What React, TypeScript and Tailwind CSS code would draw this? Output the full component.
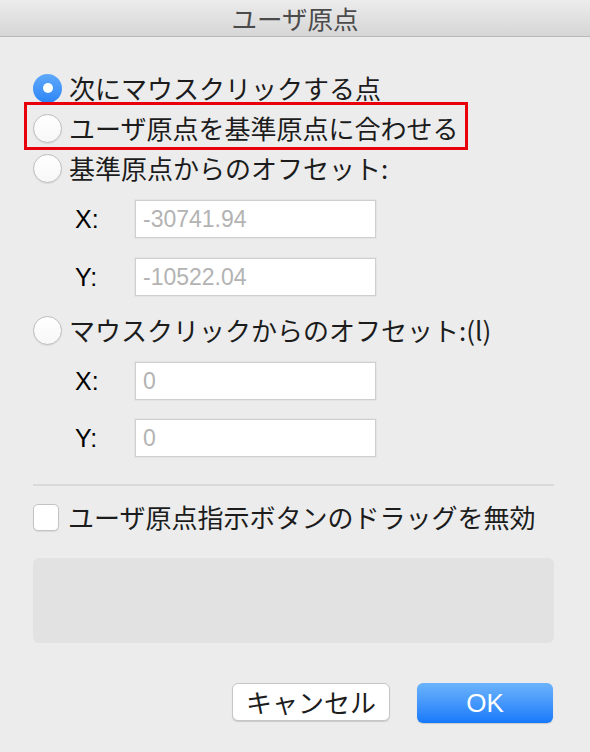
const jp = "font-['Hiragino_Kaku_Gothic_ProN','Noto_Sans_CJK_JP',sans-serif]";
const latin = "font-['Liberation_Sans','Noto_Sans_CJK_JP',sans-serif]";

const Radio = ({ checked }: { checked?: boolean }) =>
  checked ? (
    <span className="flex h-[29px] w-[29px] shrink-0 items-center justify-center rounded-full bg-gradient-to-b from-[#5fa9fb] to-[#2b85f5]">
      <span className="h-[10px] w-[10px] rounded-full bg-white" />
    </span>
  ) : (
    <span className="h-[29px] w-[29px] shrink-0 rounded-full border border-[#bdbdbd] bg-gradient-to-b from-white to-[#f7f7f7] shadow-[0_1px_1px_rgba(0,0,0,0.08)]" />
  );

const RadioRow = ({ label, checked }: { label: string; checked?: boolean }) => (
  <div className="flex h-[40px] items-center gap-[7px]">
    <Radio checked={checked} />
    <span className={`${jp} text-[26px] leading-none text-[#1c1c1c]`}>{label}</span>
  </div>
);

const Field = ({ label, value }: { label: string; value: string }) => (
  <div className="flex h-[38px] items-center pl-[42px]">
    <span className={`${latin} w-[60px] text-[25px] leading-none text-black`}>{label}</span>
    <div className="flex h-[38px] w-[241px] items-center border border-[#cfcfcf] bg-white pl-[7px] shadow-[0_0_0_1px_#e4e4e4]">
      <span className={`${latin} text-[23px] leading-none text-[#b3b3b3]`}>{value}</span>
    </div>
  </div>
);

export default function App() {
  return (
    <div className="h-[752px] w-[590px] overflow-hidden bg-[#ececec]">
      <div className="flex h-[37px] items-center justify-center border-b border-[#b9b9b9] bg-gradient-to-b from-[#ececec] to-[#d6d6d6]">
        <span className={`${jp} text-[25.5px] leading-none text-[#4b4b4b]`}>ユーザ原点</span>
      </div>

      <div className="px-[33px] pt-[31px]">
        <RadioRow label="次にマウスクリックする点" checked />
        <div className="relative">
          <RadioRow label="ユーザ原点を基準原点に合わせる" />
          <span className="absolute -left-[9px] -top-[6px] -bottom-[2px] w-[444px] border-[3px] border-[#e8000b]" />
        </div>
        <RadioRow label="基準原点からのオフセット:" />

        <div className="mt-[12px] flex flex-col gap-[20px]">
          <Field label="X:" value="-30741.94" />
          <Field label="Y:" value="-10522.04" />
        </div>

        <div className="mt-[14px]">
          <RadioRow label="マウスクリックからのオフセット:(l)" />
        </div>

        <div className="mt-[12px] flex flex-col gap-[19px]">
          <Field label="X:" value="0" />
          <Field label="Y:" value="0" />
        </div>

        <div className="mt-[27px] h-[2px] w-[521px] bg-[#dadada]" />

        <div className="mt-[11px] flex h-[40px] items-center gap-[9px]">
          <span className="h-[27px] w-[26px] shrink-0 rounded-[5px] border border-[#c3c3c3] bg-white shadow-[0_1px_1px_rgba(0,0,0,0.08)]" />
          <span className={`${jp} text-[26px] leading-none text-[#1c1c1c]`}>ユーザ原点指示ボタンのドラッグを無効</span>
        </div>

        <div className="mt-[21px] h-[85px] w-[521px] rounded-[6px] bg-[#e2e2e2]" />

        <div className="mt-[40px] flex justify-end gap-[27px] pr-[4px]">
          <button className={`${jp} flex h-[38px] w-[158px] items-center justify-center rounded-[6px] border border-[#c6c6c6] bg-white text-[26px] leading-none text-[#1c1c1c] shadow-[0_1px_1px_rgba(0,0,0,0.15)]`}>
            キャンセル
          </button>
          <button className={`${latin} flex h-[40px] w-[136px] items-center justify-center rounded-[6px] bg-gradient-to-b from-[#6bb3fb] to-[#1479fa] text-[26px] leading-none text-white shadow-[0_1px_1px_rgba(0,0,0,0.15)]`}>
            OK
          </button>
        </div>
      </div>
    </div>
  );
}
